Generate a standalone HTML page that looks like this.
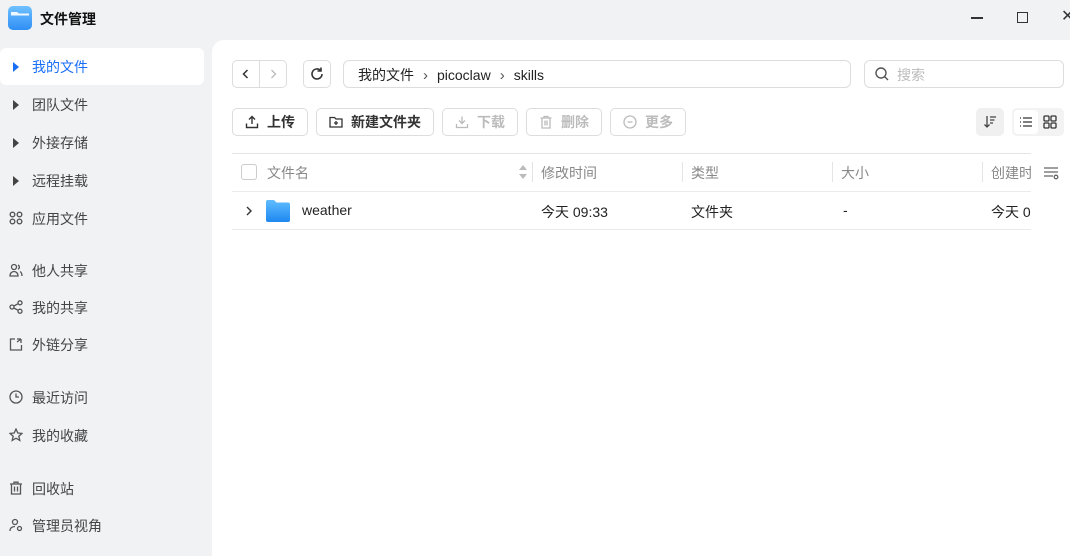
<!DOCTYPE html><html><head><meta charset="utf-8"><style>
*{box-sizing:border-box;margin:0;padding:0}
body{width:1070px;height:556px;overflow:hidden;background:#f1f2f4;font-family:"Liberation Sans","Noto Sans CJK SC",sans-serif;font-size:14px;color:#333;position:relative}
.a{position:absolute}
.nav{position:absolute;left:0;width:204px;height:37px;display:flex;align-items:center;padding-left:32px;color:#444}
.nav .ic{position:absolute;left:9px;top:11px;width:14px;height:14px}
.tri{position:absolute;left:13px;top:14px;width:0;height:0;border-left:6px solid #444;border-top:5px solid transparent;border-bottom:5px solid transparent}
.btn{position:absolute;top:108px;height:28px;border:1px solid #ddd;border-radius:5px;background:#fff;display:flex;align-items:center;justify-content:center;font-weight:bold;color:#333;gap:8px}
.dis{color:#bbb;font-weight:bold}
.th{position:absolute;top:163px;color:#888}
.sep{position:absolute;top:162px;width:1px;height:20px;background:#e5e5e5}
</style></head><body>
<svg class="a" style="left:8px;top:6px" width="24" height="24" viewBox="0 0 24 24"><defs><linearGradient id="g" x1="0" y1="0" x2="0" y2="1"><stop offset="0" stop-color="#6ec0ff"/><stop offset="1" stop-color="#2f8ff5"/></linearGradient></defs><rect x="0" y="0" width="24" height="24" rx="5" fill="url(#g)"/><path d="M3 6h6l2 1.5h10v2H3z" fill="#fff" opacity=".9"/></svg>
<div class="a" style="left:40px;top:9px;font-size:14px;font-weight:bold;color:#111">文件管理</div>
<div class="a" style="left:971px;top:17px;width:12px;height:1.5px;background:#333"></div>
<div class="a" style="left:1017px;top:12px;width:11px;height:11px;border:1.5px solid #333"></div>
<div class="a" style="left:1061px;top:6px;font-size:16px;color:#333">✕</div>

<div class="nav" style="top:48px;background:#fff;border-radius:6px;color:#1a6ef5"><span class="tri" style="border-left-color:#1a6ef5"></span>我的文件</div>
<div class="nav" style="top:86px"><span class="tri"></span>团队文件</div>
<div class="nav" style="top:124px"><span class="tri"></span>外接存储</div>
<div class="nav" style="top:162px"><span class="tri"></span>远程挂载</div>
<div class="nav" style="top:200px"><svg class="ic" viewBox="0 0 14 14" fill="none" stroke="#555" stroke-width="1.4"><circle cx="3.5" cy="3.5" r="2.3"/><circle cx="10.5" cy="3.5" r="2.3"/><circle cx="3.5" cy="10.5" r="2.3"/><circle cx="10.5" cy="10.5" r="2.3"/></svg>应用文件</div>
<div class="nav" style="top:252px"><svg class="ic" viewBox="0 0 14 14" fill="none" stroke="#555" stroke-width="1.3"><circle cx="5" cy="4" r="2.5"/><path d="M1 13c0-3 2-4.5 4-4.5s4 1.5 4 4.5z"/><path d="M9 2a2.3 2.3 0 010 4.2M11 8.5c1.3.8 2 2.3 2 4.5"/></svg>他人共享</div>
<div class="nav" style="top:289px"><svg class="ic" viewBox="0 0 14 14" fill="none" stroke="#555" stroke-width="1.3"><circle cx="3" cy="7" r="2"/><circle cx="11" cy="2.8" r="2"/><circle cx="11" cy="11.2" r="2"/><path d="M4.8 6l4.4-2.3M4.8 8l4.4 2.3"/></svg>我的共享</div>
<div class="nav" style="top:326px"><svg class="ic" viewBox="0 0 14 14" fill="none" stroke="#555" stroke-width="1.3"><path d="M6 2H1.5v11h11V8"/><path d="M8 5l4-3M12 2v4M12 2H8"/></svg>外链分享</div>
<div class="nav" style="top:379px"><svg class="ic" viewBox="0 0 14 14" fill="none" stroke="#555" stroke-width="1.3"><circle cx="7" cy="7" r="6"/><path d="M7 3.5V7h3"/></svg>最近访问</div>
<div class="nav" style="top:417px"><svg class="ic" viewBox="0 0 14 14" fill="none" stroke="#555" stroke-width="1.3"><path d="M7 1l1.8 4 4.2.4-3.2 2.8 1 4.2L7 10.2 3.2 12.4l1-4.2L1 5.4l4.2-.4z"/></svg>我的收藏</div>
<div class="nav" style="top:470px"><svg class="ic" viewBox="0 0 14 14" fill="none" stroke="#555" stroke-width="1.3"><path d="M1 3h12M5 3V1.2h4V3M2.5 3v10h9V3M5.5 5.5v5M8.5 5.5v5"/></svg>回收站</div>
<div class="nav" style="top:507px"><svg class="ic" viewBox="0 0 14 14" fill="none" stroke="#555" stroke-width="1.3"><circle cx="6" cy="4" r="2.5"/><path d="M1 13c0-3 2-4.5 5-4.5"/><circle cx="10.5" cy="10.5" r="2"/></svg>管理员视角</div>

<div class="a" style="left:212px;top:40px;width:858px;height:516px;background:#fff;border-top-left-radius:12px"></div>

<div class="a" style="left:232px;top:60px;width:55px;height:28px;border:1px solid #ddd;border-radius:5px"></div>
<div class="a" style="left:259px;top:60px;width:1px;height:28px;background:#ddd"></div>
<svg class="a" style="left:240px;top:68px" width="12" height="12" viewBox="0 0 12 12"><path d="M7.5 2L3.5 6l4 4" fill="none" stroke="#333" stroke-width="1.5"/></svg>
<svg class="a" style="left:267px;top:68px" width="12" height="12" viewBox="0 0 12 12"><path d="M4.5 2l4 4-4 4" fill="none" stroke="#bbb" stroke-width="1.3"/></svg>
<div class="a" style="left:303px;top:60px;width:28px;height:28px;border:1px solid #ddd;border-radius:5px"></div>
<svg class="a" style="left:309px;top:66px" width="16" height="16" viewBox="0 0 16 16" fill="none" stroke="#333" stroke-width="1.6"><path d="M13 8a5 5 0 11-1.5-3.6"/><path d="M12 1.5v3.5H8.5"/></svg>
<div class="a" style="left:343px;top:60px;width:508px;height:28px;border:1px solid #ddd;border-radius:6px;padding:4px 0 0 14px;color:#222">我的文件<span style="color:#555;margin:0 9px;font-size:15px">›</span>picoclaw<span style="color:#555;margin:0 9px;font-size:15px">›</span>skills</div>
<div class="a" style="left:864px;top:60px;width:200px;height:28px;border:1px solid #ddd;border-radius:6px;padding:4px 0 0 32px;color:#bbb">搜索</div>
<svg class="a" style="left:874px;top:66px" width="16" height="16" viewBox="0 0 16 16" fill="none" stroke="#555" stroke-width="1.4"><circle cx="7" cy="7" r="5"/><path d="M10.6 10.6L14 14"/></svg>

<div class="btn" style="left:232px;width:76px"><svg width="14" height="14" viewBox="0 0 14 14" fill="none" stroke="#333" stroke-width="1.4"><path d="M7 9V2M4 4.5L7 1.5l3 3M1.5 8.5v4h11v-4"/></svg>上传</div>
<div class="btn" style="left:316px;width:118px"><svg width="14" height="14" viewBox="0 0 14 14" fill="none" stroke="#333" stroke-width="1.3"><path d="M1 2.5h4.5l1.5 1.5h6v8H1z"/><path d="M7 6v4M5 8h4"/></svg>新建文件夹</div>
<div class="btn dis" style="left:442px;width:76px"><svg width="14" height="14" viewBox="0 0 14 14" fill="none" stroke="#bbb" stroke-width="1.3"><path d="M7 1.5v7M4 5.5l3 3 3-3M1.5 9v3.5h11V9"/></svg>下载</div>
<div class="btn dis" style="left:526px;width:76px"><svg width="14" height="14" viewBox="0 0 14 14" fill="none" stroke="#bbb" stroke-width="1.3"><path d="M1.5 3h11M5 3V1.5h4V3M3 3v10h8V3M6 5.5v5M8 5.5v5"/></svg>删除</div>
<div class="btn dis" style="left:610px;width:76px"><svg width="14" height="14" viewBox="0 0 14 14" fill="none" stroke="#bbb" stroke-width="1.3"><circle cx="7" cy="7" r="6"/><path d="M4.5 7h5"/></svg>更多</div>

<div class="a" style="left:976px;top:108px;width:28px;height:28px;background:#f0f0f0;border-radius:5px"></div>
<svg class="a" style="left:983px;top:115px" width="14" height="14" viewBox="0 0 14 14" fill="none" stroke="#444" stroke-width="1.3"><path d="M4 1v11M1.5 9.5L4 12l2.5-2.5M7 2h6M7 5h4.5M7 8h3"/></svg>
<div class="a" style="left:1012px;top:108px;width:52px;height:28px;background:#f3f3f3;border-radius:5px"></div>
<div class="a" style="left:1014px;top:110px;width:24px;height:24px;background:#fff;border-radius:4px"></div>
<svg class="a" style="left:1019px;top:115px" width="14" height="14" viewBox="0 0 14 14" stroke="#333" stroke-width="1.3"><path d="M1 3h1M1 7h1M1 11h1M4 3h9M4 7h9M4 11h9"/></svg>
<svg class="a" style="left:1043px;top:115px" width="14" height="14" viewBox="0 0 14 14" fill="none" stroke="#333" stroke-width="1.3"><rect x="1" y="1" width="5" height="5" rx="1"/><rect x="8" y="1" width="5" height="5" rx="1"/><rect x="1" y="8" width="5" height="5" rx="1"/><rect x="8" y="8" width="5" height="5" rx="1"/></svg>

<div class="a" style="left:232px;top:153px;width:799px;height:1px;background:#e5e5e5"></div>
<div class="a" style="left:232px;top:191px;width:799px;height:1px;background:#ebebeb"></div>
<div class="a" style="left:232px;top:229px;width:799px;height:1px;background:#ebebeb"></div>
<div class="a" style="left:241px;top:164px;width:16px;height:16px;border:1px solid #ccc;border-radius:3px"></div>
<div class="th" style="left:267px">文件名</div>
<svg class="a" style="left:518px;top:164px" width="10" height="16" viewBox="0 0 10 16" fill="#bbb"><path d="M5 1l4 5H1zM5 15l4-5H1z"/></svg>
<div class="sep" style="left:532px"></div><div class="th" style="left:541px">修改时间</div>
<div class="sep" style="left:682px"></div><div class="th" style="left:691px">类型</div>
<div class="sep" style="left:832px"></div><div class="th" style="left:841px">大小</div>
<div class="sep" style="left:982px"></div><div class="th" style="left:991px;width:40px;overflow:hidden;white-space:nowrap">创建时间</div>
<svg class="a" style="left:1043px;top:166px" width="16" height="14" viewBox="0 0 16 14" fill="none" stroke="#666" stroke-width="1.3"><path d="M1 2h14M1 6h14M1 10h9"/><circle cx="13" cy="11" r="1.8"/></svg>

<svg class="a" style="left:244px;top:205px" width="10" height="12" viewBox="0 0 10 12"><path d="M3 2l4 4-4 4" fill="none" stroke="#333" stroke-width="1.4"/></svg>
<svg class="a" style="left:265px;top:199px" width="26" height="24" viewBox="0 0 26 24"><defs><linearGradient id="f" x1="0" y1="0" x2="0" y2="1"><stop offset="0" stop-color="#5fbcff"/><stop offset="1" stop-color="#1e88f0"/></linearGradient></defs><path d="M1 3a2 2 0 012-2h6l2.5 2.5H23a2 2 0 012 2V21a2 2 0 01-2 2H3a2 2 0 01-2-2z" fill="url(#f)"/></svg>
<div class="a" style="left:302px;top:202px;color:#222">weather</div>
<div class="a" style="left:541px;top:202px;color:#222">今天 09:33</div>
<div class="a" style="left:691px;top:202px;color:#222">文件夹</div>
<div class="a" style="left:843px;top:202px;color:#222">-</div>
<div class="a" style="left:991px;top:202px;color:#222;width:40px;overflow:hidden;white-space:nowrap">今天 09:33</div>
</body></html>
